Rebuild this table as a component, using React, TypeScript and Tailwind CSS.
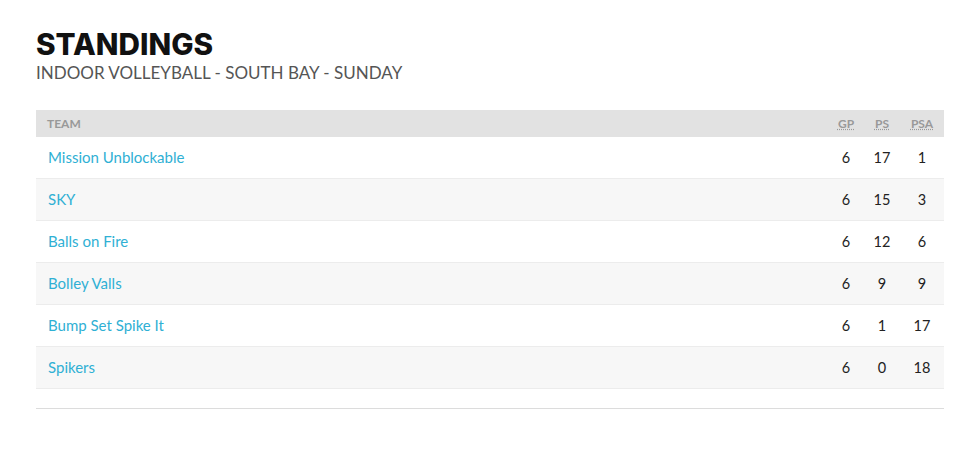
import React from "react";

const rows = [
  ["Mission Unblockable", 6, 17, 1],
  ["SKY", 6, 15, 3],
  ["Balls on Fire", 6, 12, 6],
  ["Bolley Valls", 6, 9, 9],
  ["Bump Set Spike It", 6, 1, 17],
  ["Spikers", 6, 0, 18],
] as const;

export default function App() {
  return (
    <div className="w-[980px] h-[450px] bg-white" style={{ fontFamily: "Lato, 'Noto Sans', sans-serif" }}>
      <div className="ml-[36px] w-[908px] pt-[26px]">
        <h1 className="text-[29.7px] leading-[36px] text-[#111]" style={{ fontFamily: "Inter, sans-serif", fontWeight: 800 }}>
          STANDINGS
        </h1>
        <div className="text-[17px] leading-[20px] text-[#555] mt-[1px]">INDOOR VOLLEYBALL - SOUTH BAY - SUNDAY</div>
        <div className="mt-[27px] border-b border-[#dcdcdc] pb-[19px]">
          <div className="flex h-[27px] items-center bg-[#e2e2e2] text-[12px] font-bold text-[#999]">
            <div className="flex-1 pl-[11px]">TEAM</div>
            <div className="w-[36px] text-center underline decoration-dotted">GP</div>
            <div className="w-[36px] text-center underline decoration-dotted">PS</div>
            <div className="w-[44px] text-center underline decoration-dotted mr-[-3px]">PSA</div>
            <div className="w-[3px]" />
          </div>
          {rows.map((r, i) => (
            <div
              key={r[0]}
              className={`flex h-[42px] items-center border-b border-[#ececec] text-[14.5px] ${i % 2 === 1 ? "bg-[#f7f7f7]" : "bg-white"}`}
            >
              <div className="flex-1 pl-[12px] text-[15px] text-[#2fb0d4]">{r[0]}</div>
              <div className="w-[36px] text-center text-[#222]">{r[1]}</div>
              <div className="w-[36px] text-center text-[#222]">{r[2]}</div>
              <div className="w-[44px] text-center text-[#222] mr-[-3px]">{r[3]}</div>
              <div className="w-[3px]" />
            </div>
          ))}
        </div>
      </div>
    </div>
  );
}
